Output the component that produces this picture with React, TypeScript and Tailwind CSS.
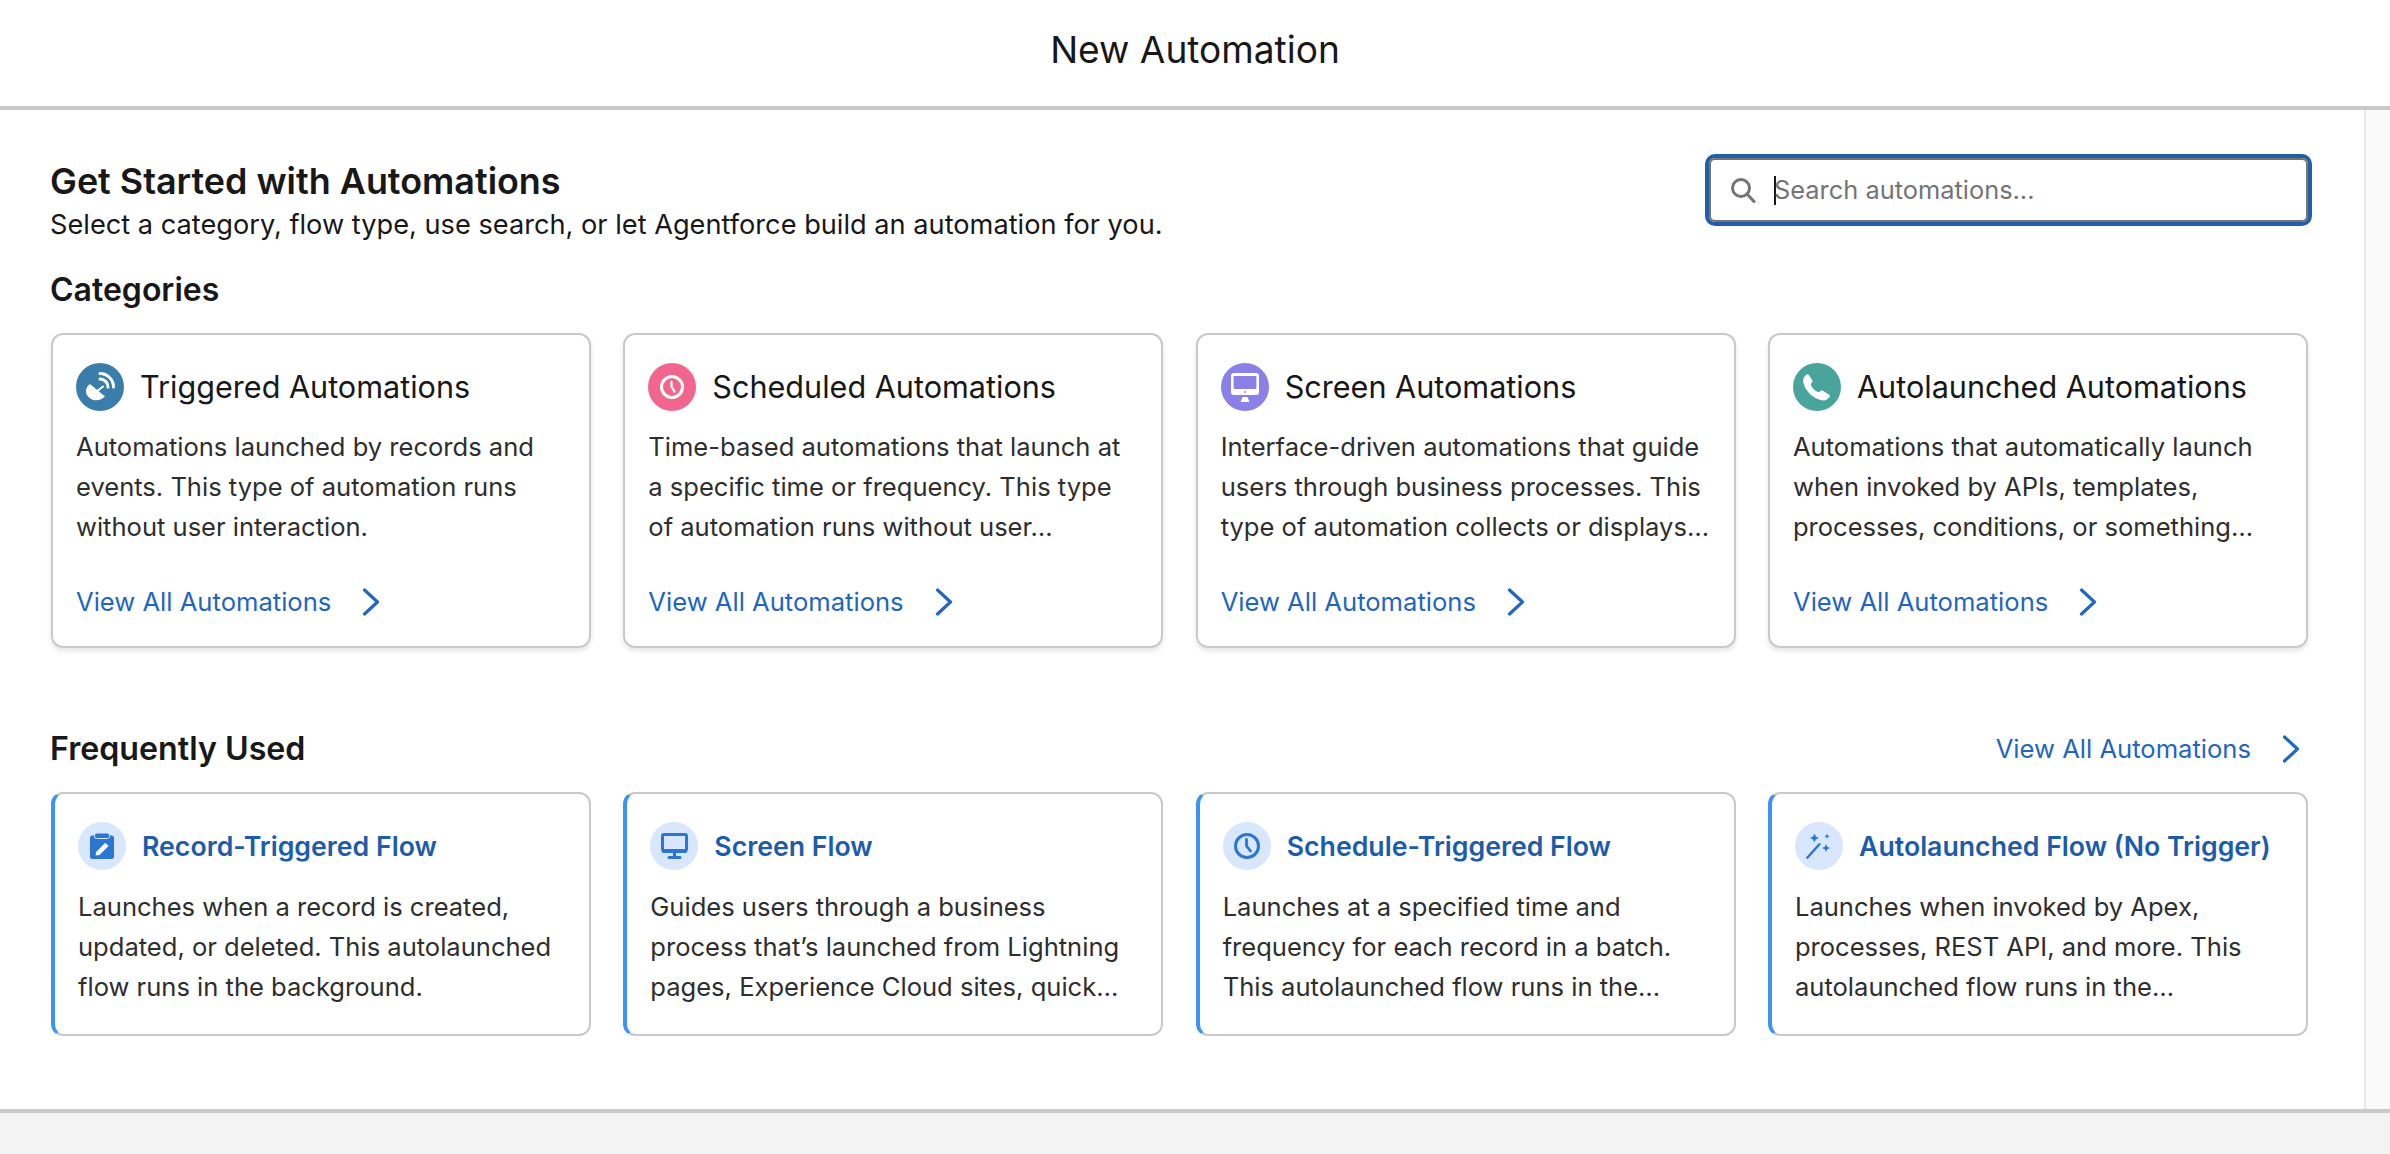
import React from "react";

const desc = "text-[25.55px] leading-[40px] text-[#2e2e2e]";

function Chevron() {
  return (
    <svg width="20" height="28" viewBox="0 0 20 28" fill="none" stroke="#2268c0" strokeWidth="3.2" strokeLinecap="round" strokeLinejoin="round">
      <path d="M3.5 2 L16.5 14 L3.5 26" />
    </svg>
  );
}

function LinkRow() {
  return (
    <div className="flex items-center gap-[30px]">
      <span className="text-[25.6px] leading-[40px] text-[#1f66bf]">View All Automations</span>
      <Chevron />
    </div>
  );
}

function Satellite() {
  return (
    <svg width="48" height="48" viewBox="0 0 48 48" fill="none">
      <path d="M14 21 L29 33.5 C25 38 17 39 12.5 34 C8.5 30 9.5 24 14 21 Z" fill="#fff" />
      <path d="M20 29 L27 23.5" stroke="#fff" strokeWidth="2" strokeLinecap="round" />
      <path d="M24 10.5 A13.5 13.5 0 0 1 37.5 24" stroke="#fff" strokeWidth="3" strokeLinecap="round" />
      <path d="M24 16 A8 8 0 0 1 32 24" stroke="#fff" strokeWidth="3" strokeLinecap="round" />
    </svg>
  );
}

function Phone() {
  return (
    <svg width="48" height="48" viewBox="0 0 48 48">
      <path
        d="M13.5 11.5 C14.5 11 15.5 11.3 16 12.2 L19.3 17.3 C19.8 18.2 19.6 19.2 18.8 19.8 L17.6 21 C18.5 24.5 22.5 28.5 25.8 29.3 L27.4 27.9 C28.2 27.3 29 27.3 29.9 27.7 L36 31.5 C37 32.2 37.2 33.2 36.5 34.2 L33.5 36.8 C31.5 38 27 37.5 22.5 35 C16 31.5 11.5 25 10.3 19.5 C9.8 16.5 10.5 13.5 13.5 11.5 Z"
        fill="#fff"
      />
    </svg>
  );
}

function ClockWhite() {
  return (
    <svg width="28" height="28" viewBox="0 0 28 28" fill="none" stroke="#fff" strokeLinecap="round" strokeLinejoin="round">
      <circle cx="14" cy="14" r="10.5" strokeWidth="3" />
      <path d="M13.5 8.5 V13.5 L16.5 18.5" strokeWidth="2.2" />
    </svg>
  );
}

function Imac() {
  return (
    <svg width="28" height="29" viewBox="0 0 28 29">
      <rect x="0" y="0" width="28" height="22" rx="3" fill="#fff" />
      <rect x="2.6" y="3" width="22.8" height="13" rx="1" fill="#8a80e8" />
      <circle cx="14" cy="19" r="0.9" fill="#8a80e8" />
      <path d="M9.5 29 L11.5 24 H16.5 L18.5 29 Z" fill="#fff" />
    </svg>
  );
}

function Clipboard() {
  return (
    <svg width="24" height="26" viewBox="0 0 24 26">
      <rect x="0" y="2.5" width="24" height="23.5" rx="2.5" fill="#2a76d2" />
      <rect x="4.5" y="0" width="15" height="5.5" rx="2.2" fill="#2a76d2" stroke="#d8e6fe" strokeWidth="1" />
      <path d="M5.5 22.5 L6.3 18.8 L15.3 9.8 L18.6 13 L9.5 22 Z" fill="#fff" />
    </svg>
  );
}

function MonitorBlue() {
  return (
    <svg width="27" height="26" viewBox="0 0 27 26" fill="none">
      <rect x="1.5" y="1.5" width="24" height="16" rx="1.5" stroke="#2a76d2" strokeWidth="3" />
      <rect x="1" y="16.5" width="25" height="3.5" rx="1.2" fill="#2a76d2" />
      <path d="M12 20 H15 V23 H19 a1.5 1.5 0 0 1 0 3 H8 a1.5 1.5 0 0 1 0 -3 H12 Z" fill="#2a76d2" />
    </svg>
  );
}

function ClockBlue() {
  return (
    <svg width="28" height="28" viewBox="0 0 28 28" fill="none" stroke="#2a76d2" strokeLinecap="round" strokeLinejoin="round">
      <circle cx="14" cy="14" r="11.5" strokeWidth="3" />
      <path d="M13.5 7.5 V14 L17.5 19" strokeWidth="2.8" />
    </svg>
  );
}

function Wand() {
  return (
    <svg width="25" height="26" viewBox="0 0 25 26" fill="#2a76d2">
      <path d="M1.3 24.7 L13.4 11.2" stroke="#2a76d2" strokeWidth="2.4" strokeLinecap="round" fill="none" />
      <path d="M8.4 0.6 L9.8 3.6 L12.8 5 L9.8 6.4 L8.4 9.4 L7 6.4 L4 5 L7 3.6 Z" />
      <path d="M20 11 L21.2 13.8 L24 15 L21.2 16.2 L20 19 L18.8 16.2 L16 15 L18.8 13.8 Z" />
      <path d="M21 0.6 L21.8 2.5 L23.7 3.3 L21.8 4.1 L21 6 L20.2 4.1 L18.3 3.3 L20.2 2.5 Z" />
    </svg>
  );
}

function SearchIcon() {
  return (
    <svg width="26" height="26" viewBox="0 0 26 26" fill="none" stroke="#747474" strokeWidth="3" strokeLinecap="round">
      <circle cx="11" cy="11" r="8.5" />
      <path d="M17.5 17.5 L24 24.5" />
    </svg>
  );
}

const cats = [
  { title: "Triggered Automations", bg: "bg-[#3a7dab]", icon: <Satellite />, text: "Automations launched by records and events. This type of automation runs without user interaction." },
  { title: "Scheduled Automations", bg: "bg-[#f0668e]", icon: <ClockWhite />, text: "Time-based automations that launch at a specific time or frequency. This type of automation runs without user…" },
  { title: "Screen Automations", bg: "bg-[#8a80e8]", icon: <Imac />, text: "Interface-driven automations that guide users through business processes. This type of automation collects or displays…" },
  { title: "Autolaunched Automations", bg: "bg-[#49a59b]", icon: <Phone />, text: "Automations that automatically launch when invoked by APIs, templates, processes, conditions, or something…" },
];

const flows = [
  { title: "Record-Triggered Flow", icon: <Clipboard />, text: "Launches when a record is created, updated, or deleted. This autolaunched flow runs in the background." },
  { title: "Screen Flow", icon: <MonitorBlue />, text: "Guides users through a business process that’s launched from Lightning pages, Experience Cloud sites, quick…" },
  { title: "Schedule-Triggered Flow", icon: <ClockBlue />, text: "Launches at a specified time and frequency for each record in a batch. This autolaunched flow runs in the…" },
  { title: "Autolaunched Flow (No Trigger)", icon: <Wand />, text: "Launches when invoked by Apex, processes, REST API, and more. This autolaunched flow runs in the…" },
];

export default function App() {
  return (
    <div className="flex h-[1154px] flex-col overflow-hidden bg-white font-['Inter',sans-serif]">
      <header className="flex h-[110px] shrink-0 items-center justify-center border-b-4 border-[#c9c9c9] pb-[6px]">
        <h1 className="text-[37.1px] leading-[48px] text-[#181818]">New Automation</h1>
      </header>
      <div className="flex min-h-0 flex-1">
        <main className="flex-1 pl-[50px] pr-[52px] pt-[44px]">
          <div className="flex items-start justify-between">
            <div className="pt-[7px]">
              <h2 className="text-[35.9px] font-semibold leading-[40px] text-[#181818]">Get Started with Automations</h2>
              <p className="mt-[4px] text-[27.2px] leading-[40px] text-[#181818]">Select a category, flow type, use search, or let Agentforce build an automation for you.</p>
            </div>
            <div className="h-[72px] w-[607px] rounded-[10px] border-4 border-[#215fa8]">
              <div className="flex h-full items-center rounded-[6px] border-2 border-[#747474] pl-[19px]">
                <SearchIcon />
                <span className="ml-[18px] h-[29px] w-[2px] bg-[#181818]" />
                <span className="-ml-[2px] text-[25.4px] leading-[32px] text-[#747474]">Search automations...</span>
              </div>
            </div>
          </div>
          <h3 className="mt-[25px] text-[32px] font-semibold leading-[40px] text-[#181818]">Categories</h3>
          <div className="ml-[1px] mr-[4px] mt-[23px] grid grid-cols-4 gap-[32.3px]">
            {cats.map((c) => (
              <div key={c.title} className="flex h-[315px] flex-col rounded-[12px] border-2 border-[#c9c9c9] px-[23px] pt-[28px] shadow-[0_3px_5px_rgba(0,0,0,0.1)]">
                <div className="flex items-center gap-[16px]">
                  <span className={`flex h-[48px] w-[48px] shrink-0 items-center justify-center rounded-full ${c.bg}`}>{c.icon}</span>
                  <span className="text-[30.6px] leading-[48px] text-[#181818]">{c.title}</span>
                </div>
                <p className={`mt-[16px] ${desc}`}>{c.text}</p>
                <div className="mt-[35px]"><LinkRow /></div>
              </div>
            ))}
          </div>
          <div className="mr-[4px] mt-[81px] flex items-center justify-between pr-[7px]">
            <h3 className="text-[32.2px] font-semibold leading-[40px] text-[#181818]">Frequently Used</h3>
            <LinkRow />
          </div>
          <div className="ml-[1px] mr-[4px] mt-[23px] grid grid-cols-4 gap-[32.3px]">
            {flows.map((f) => (
              <div key={f.title} className="h-[244px] rounded-[12px] border-2 border-l-4 border-[#c9c9c9] border-l-[#3b93f5] pl-[23px] pr-[20px] pt-[28px]">
                <div className="flex items-center gap-[16px]">
                  <span className="flex h-[48px] w-[48px] shrink-0 items-center justify-center rounded-full bg-[#d8e6fe]">{f.icon}</span>
                  <span className="text-[26.7px] font-semibold leading-[48px] text-[#1c5cab]">{f.title}</span>
                </div>
                <p className={`mt-[17px] ${desc}`}>{f.text}</p>
              </div>
            ))}
          </div>
        </main>
        <div className="w-[26px] shrink-0 border-l-2 border-[#e8e8e8] bg-[#fafafa]" />
      </div>
      <footer className="h-[45px] shrink-0 border-t-4 border-[#c9c9c9] bg-[#f3f3f3]" />
    </div>
  );
}
